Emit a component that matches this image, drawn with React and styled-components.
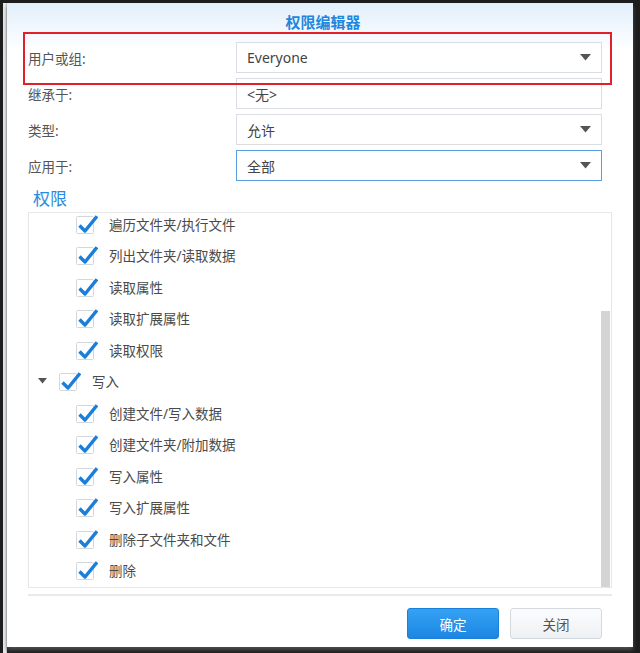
import React from "react";
import styled, { createGlobalStyle } from "styled-components";

const GlobalStyle = createGlobalStyle`
  html, body {
    margin: 0;
    padding: 0;
    background: #1d1d1d;
    height: 100%;
    overflow: hidden;
  }
  body {
    font-family: "Noto Sans", "Noto Sans CJK SC", sans-serif;
  }
`;

const Page = styled.div`
  display: flex;
  height: 653px;
`;

const BackWindow = styled.div`
  width: 3px;
  margin-left: 3px;
  margin-top: 3px;
  background: #e7e9ec;
  border-right: 1px solid #c9cdd2;
`;

const Dialog = styled.div`
  margin-top: 3px;
  width: 626px;
  height: 644px;
  background: linear-gradient(#e2effb 0px, #ffffff 48px);
  box-shadow: 0 3px 4px rgba(90, 90, 90, 0.8);
  display: flex;
  flex-direction: column;
  padding: 0 21px;
  box-sizing: border-box;
`;

const Title = styled.div`
  height: 36px;
  line-height: 34px;
  text-align: center;
  color: #1f86dd;
  font-size: 15px;
  font-weight: 700;
  padding-left: 6px;
  padding-top: 2px;
  box-sizing: border-box;
`;

const Form = styled.div`
  position: relative;
  display: flex;
  flex-direction: column;
  gap: 5px;
  padding-top: 3px;
  padding-right: 10px;
`;

const Highlight = styled.div`
  position: absolute;
  left: -5px;
  right: 0;
  top: -7px;
  height: 53px;
  border: 2px solid #e2202b;
  box-sizing: border-box;
  pointer-events: none;
`;

const Row = styled.div`
  display: flex;
  align-items: center;
  height: 31px;
`;

const Label = styled.div`
  width: 208px;
  color: #555;
  font-size: 13.5px;
`;

const Field = styled.div`
  flex: 1;
  height: 31px;
  box-sizing: border-box;
  border: 1px solid ${({ $focused }) => ($focused ? "#5a9fe0" : "#dadde1")};
  background: #fff;
  display: flex;
  align-items: center;
  justify-content: space-between;
  padding: 0 10px 0 10px;
  color: #444;
  font-size: 14px;
`;

const Caret = () => (
  <svg width="11" height="7" viewBox="0 0 11 7">
    <polygon points="0,0 11,0 5.5,6.5" fill="#545454" />
  </svg>
);

const SectionTitle = styled.div`
  color: #2b8ae0;
  font-size: 17px;
  margin: 6px 0 1px 5px;
  line-height: 24px;
`;

const ListBox = styled.div`
  position: relative;
  height: 376px;
  border: 1px solid #e6e7e9;
  overflow: hidden;
  box-sizing: border-box;
`;

const ListContent = styled.div`
  margin-top: -5px;
`;

const Item = styled.div`
  height: 31.5px;
  display: flex;
  align-items: center;
  padding-left: ${({ $level }) => ($level ? 47 : 9)}px;
  color: #4a4a4a;
  font-size: 13.5px;
`;

const Toggle = styled.span`
  width: 13px;
  display: flex;
  justify-content: flex-start;
  margin-right: 8px;
`;

const CheckWrap = styled.span`
  display: flex;
  margin-right: 11px;
`;

const ScrollThumb = styled.div`
  position: absolute;
  right: 1px;
  top: 98px;
  bottom: 0;
  width: 9px;
  background: #d4d4d4;
`;

const Check = () => (
  <CheckWrap>
    <svg width="22" height="22" viewBox="0 0 22 22">
      <rect x="0.5" y="3.5" width="17" height="17" rx="1" fill="#fff" stroke="#d3d6da" />
      <path d="M3.5 12.5 L9 18 L21 3.2" fill="none" stroke="#1b7ed9" strokeWidth="3.4" strokeLinejoin="round" />
    </svg>
  </CheckWrap>
);

const Footer = styled.div`
  border-top: 2px solid #e9eaec;
  margin-top: 6px;
  padding-top: 12px;
  padding-right: 10px;
  display: flex;
  justify-content: flex-end;
  gap: 11px;
`;

const Button = styled.button`
  width: 92px;
  height: 31px;
  border-radius: 3px;
  font-family: inherit;
  font-size: 13.5px;
  cursor: pointer;
  border: 1px solid ${({ $primary }) => ($primary ? "#1a7fd8" : "#d4d9de")};
  background: ${({ $primary }) =>
    $primary
      ? "linear-gradient(#34a2f4, #1c86e2)"
      : "linear-gradient(#fbfcfd, #eef1f4)"};
  color: ${({ $primary }) => ($primary ? "#fff" : "#555")};
`;

const items = [
  { level: 1, text: "遍历文件夹/执行文件" },
  { level: 1, text: "列出文件夹/读取数据" },
  { level: 1, text: "读取属性" },
  { level: 1, text: "读取扩展属性" },
  { level: 1, text: "读取权限" },
  { level: 0, text: "写入", group: true },
  { level: 1, text: "创建文件/写入数据" },
  { level: 1, text: "创建文件夹/附加数据" },
  { level: 1, text: "写入属性" },
  { level: 1, text: "写入扩展属性" },
  { level: 1, text: "删除子文件夹和文件" },
  { level: 1, text: "删除" },
];

export default function App() {
  return (
    <>
      <GlobalStyle />
      <Page>
        <BackWindow />
        <Dialog>
          <Title>权限编辑器</Title>
          <Form>
            <Highlight />
            <Row>
              <Label>用户或组:</Label>
              <Field>
                Everyone
                <Caret />
              </Field>
            </Row>
            <Row>
              <Label>继承于:</Label>
              <Field>&lt;无&gt;</Field>
            </Row>
            <Row>
              <Label>类型:</Label>
              <Field>
                允许
                <Caret />
              </Field>
            </Row>
            <Row>
              <Label>应用于:</Label>
              <Field $focused>
                全部
                <Caret />
              </Field>
            </Row>
          </Form>
          <SectionTitle>权限</SectionTitle>
          <ListBox>
            <ListContent>
              {items.map((it, i) => (
                <Item key={i} $level={it.level}>
                  {it.group && (
                    <Toggle>
                      <svg width="9" height="6" viewBox="0 0 9 6">
                        <polygon points="0,0 9,0 4.5,5.5" fill="#555" />
                      </svg>
                    </Toggle>
                  )}
                  <Check />
                  {it.text}
                </Item>
              ))}
            </ListContent>
            <ScrollThumb />
          </ListBox>
          <Footer>
            <Button $primary>确定</Button>
            <Button>关闭</Button>
          </Footer>
        </Dialog>
      </Page>
    </>
  );
}
